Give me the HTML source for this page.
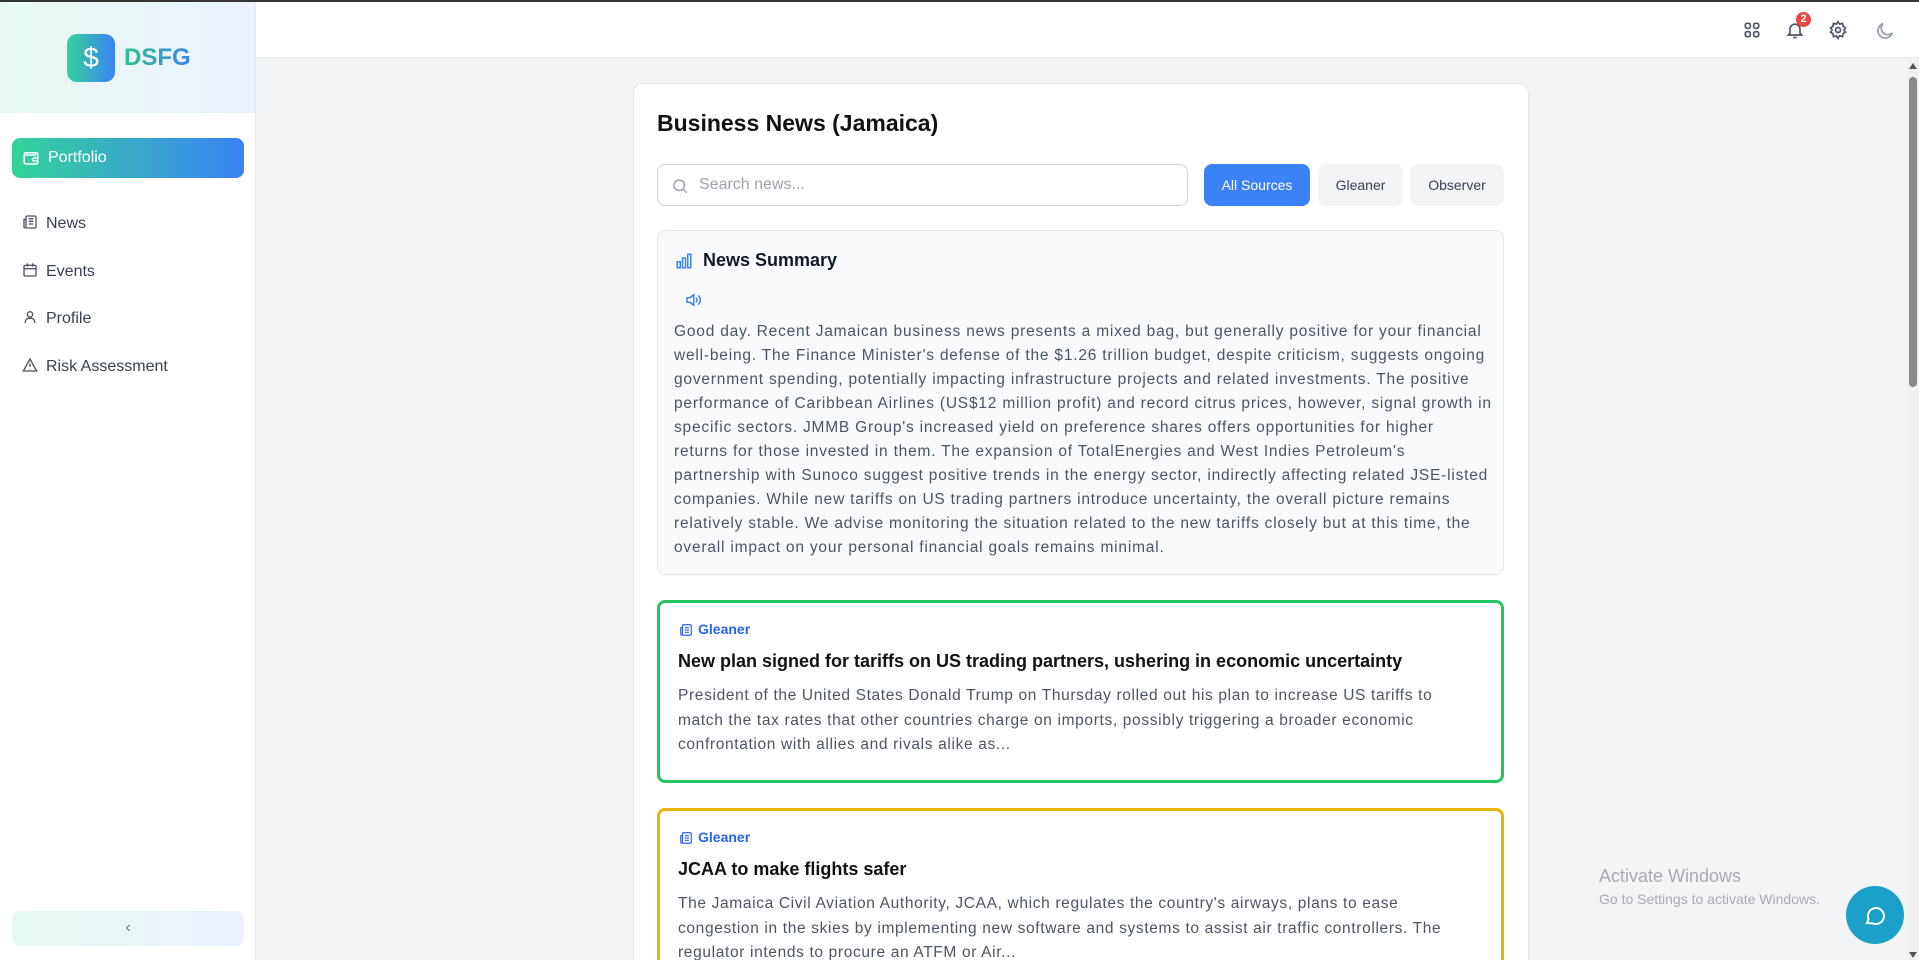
<!DOCTYPE html>
<html style="overflow:hidden"><head><meta charset="utf-8"><style>
*{box-sizing:border-box;margin:0;padding:0}
html,body{width:1919px;height:960px;overflow:hidden}
body{font-family:"Liberation Sans",sans-serif;background:#f3f4f6;color:#111827}
#w{position:relative;width:1919px;height:960px;overflow:hidden}
.topline{position:absolute;left:0;top:0;width:1919px;height:2px;background:#333}
.side{position:absolute;left:0;top:2px;width:256px;height:958px;background:#fff;border-right:1px solid #e5e7eb}
.logo{height:111px;background:linear-gradient(90deg,#e8f8f1,#ebf2fd);position:relative}
.lic{position:absolute;left:67px;top:32px;width:48px;height:48px;border-radius:10px;background:linear-gradient(90deg,#34d399,#3b82f6);color:#fff;font-size:28px;text-align:center;line-height:48px}
.ltx{position:absolute;left:124px;top:42px;font-size:24px;font-weight:bold;background:linear-gradient(90deg,#2bc48a,#3b82f6);-webkit-background-clip:text;color:transparent}
.pf{position:absolute;left:12px;top:136px;width:232px;height:40px;border-radius:8px;background:linear-gradient(90deg,#34d399,#3b82f6);color:#fff;font-size:16px;line-height:40px;padding-left:36px}
.pf svg{position:absolute;left:10px;top:11px}
.nav{position:absolute;left:22px;font-size:16px;color:#374151;height:20px;line-height:20px}
.nav span{position:absolute;left:24px;white-space:nowrap}
.col{position:absolute;left:12px;top:909px;width:232px;height:35px;border-radius:8px;background:linear-gradient(90deg,#e8f8f1,#ebf2fd);color:#6b7280;text-align:center;line-height:34px;font-size:16px}
.hdr{position:absolute;left:256px;top:2px;width:1663px;height:56px;background:#fff;border-bottom:1px solid #e5e7eb}
.hi{position:absolute;top:18px}
.card{position:absolute;left:633px;top:83px;width:896px;height:900px;background:#fff;border:1px solid #e5e7eb;border-radius:10px}
h1{position:absolute;left:657px;top:110px;font-size:23px;font-weight:bold;color:#111}
.search{position:absolute;left:657px;top:164px;width:531px;height:42px;border:1px solid #d1d5db;border-radius:8px;background:#fff;font-size:16px;color:#9ca3af;line-height:40px;padding-left:41px}
.search svg{position:absolute;left:13px;top:12px}
.btn{position:absolute;top:164px;height:42px;border-radius:8px;font-size:14px;line-height:42px;text-align:center;background:#f3f4f6;color:#374151}
.sum{position:absolute;left:657px;top:230px;width:847px;height:345px;background:#f9fafb;border:1px solid #e5e7eb;border-radius:8px}
.st{position:absolute;left:703px;top:250px;font-size:18px;font-weight:bold}
.txt{position:absolute;left:674px;top:320px;font-size:15.5px;line-height:24px;color:#4b5563;white-space:nowrap;letter-spacing:0.8px}
.art{position:absolute;left:657px;width:847px;border-radius:8px;border:3px solid}
.src{position:absolute;left:679px;font-size:14px;color:#2563eb;font-weight:bold}
.src svg{position:absolute;left:0;top:2px}
.src span{margin-left:19px}
.at{position:absolute;left:678px;font-size:18px;font-weight:bold;color:#111;white-space:nowrap}
.ad{position:absolute;left:678px;font-size:15.5px;line-height:24.5px;color:#4b5563;white-space:nowrap;letter-spacing:0.65px}
.sb{position:absolute;left:1907px;top:58px;width:12px;height:902px;background:#f1f1f1}
.thumb{position:absolute;left:1909px;top:77px;width:8px;height:310px;background:#8a8a8a;border-radius:4px}
.chat{position:absolute;left:1846px;top:886px;width:58px;height:58px;border-radius:50%;background:#1aa0c9}
.act{position:absolute;left:1599px;top:866px;color:#a8aab0;font-size:18px}
.act2{position:absolute;left:1599px;top:891px;color:#a8aab0;font-size:14px}
</style></head><body><div id="w">
<div class="topline"></div>
<div class="side">
 <div class="logo"><div class="lic">$</div><div class="ltx">DSFG</div></div>
 <div class="pf"><svg width="18" height="18" viewBox="0 0 24 24" fill="none" stroke="#fff" stroke-width="2"><rect x="3" y="5" width="18" height="15" rx="2"/><path d="M16 12h5v4h-5a2 2 0 010-4zM3 8h15V5"/></svg>Portfolio</div>
 <div class="nav" style="top:212px"><svg width="16" height="16" viewBox="0 0 24 24" fill="none" stroke="#4b5563" stroke-width="2"><rect x="6" y="3" width="15" height="18" rx="2"/><path d="M6 8H3v11a2 2 0 002 2M10 7h7M10 11h7M10 15h7"/></svg><span>News</span></div>
 <div class="nav" style="top:260px"><svg width="16" height="16" viewBox="0 0 24 24" fill="none" stroke="#4b5563" stroke-width="2"><rect x="3" y="5" width="18" height="16" rx="2"/><path d="M3 10h18M8 2v5M16 2v5"/></svg><span>Events</span></div>
 <div class="nav" style="top:307px"><svg width="16" height="16" viewBox="0 0 24 24" fill="none" stroke="#4b5563" stroke-width="2"><circle cx="12" cy="8" r="4"/><path d="M5 21v-2a5 5 0 015-5h4a5 5 0 015 5v2"/></svg><span>Profile</span></div>
 <div class="nav" style="top:355px"><svg width="16" height="16" viewBox="0 0 24 24" fill="none" stroke="#4b5563" stroke-width="2"><path d="M12 3L2 21h20zM12 10v5M12 18v.5"/></svg><span>Risk Assessment</span></div>
 <div class="col">‹</div>
</div>
<div class="hdr">
 <svg class="hi" style="left:1486px" width="20" height="20" viewBox="0 0 24 24" fill="none" stroke="#4b5563" stroke-width="2"><rect x="4" y="4" width="6" height="6" rx="2"/><rect x="14" y="4" width="6" height="6" rx="2"/><rect x="4" y="14" width="6" height="6" rx="2"/><rect x="14" y="14" width="6" height="6" rx="2"/></svg>
 <svg class="hi" style="left:1529px" width="20" height="20" viewBox="0 0 24 24" fill="none" stroke="#4b5563" stroke-width="2"><path d="M6 16V11a6 6 0 0112 0v5l2 2H4zM10 21h4"/></svg>
 <div style="position:absolute;left:1540px;top:10px;width:15px;height:15px;border-radius:50%;background:#ef4444;color:#fff;font-size:11px;font-weight:bold;text-align:center;line-height:15px">2</div>
 <svg class="hi" style="left:1572px" width="20" height="20" viewBox="0 0 24 24" fill="none" stroke="#4b5563" stroke-width="2"><circle cx="12" cy="12" r="3"/><path d="M12 2l2 3 3.5-1 .5 3.5 3 2-2 2.5 2 2.5-3 2-.5 3.5-3.5-1-2 3-2-3-3.5 1-.5-3.5-3-2 2-2.5-2-2.5 3-2L6.5 4 10 5z"/></svg>
 <svg class="hi" style="left:1618px" width="22" height="22" viewBox="0 0 24 24" fill="none" stroke="#9ca3af" stroke-width="2"><path d="M20 14A8 8 0 1110 4a6 6 0 0010 10z"/></svg>
</div>
<div class="card"></div>
<h1>Business News (Jamaica)</h1>
<div class="search"><svg width="18" height="18" viewBox="0 0 24 24" fill="none" stroke="#9ca3af" stroke-width="2"><circle cx="11" cy="11" r="7"/><path d="M16 16l5 5"/></svg>Search news...</div>
<div class="btn" style="left:1204px;width:106px;background:#3b82f6;color:#fff">All Sources</div>
<div class="btn" style="left:1318px;width:85px">Gleaner</div>
<div class="btn" style="left:1410px;width:94px">Observer</div>
<div class="sum"></div>
<svg style="position:absolute;left:675px;top:252px" width="18" height="18" viewBox="0 0 24 24" fill="none" stroke="#3b82f6" stroke-width="2"><rect x="3" y="13" width="4" height="8"/><rect x="10" y="8" width="4" height="13"/><rect x="17" y="3" width="4" height="18"/></svg>
<div class="st">News Summary</div>
<svg style="position:absolute;left:683px;top:291px" width="20" height="18" viewBox="0 0 24 24" fill="none" stroke="#3b82f6" stroke-width="2"><path d="M4 9h4l5-4v14l-5-4H4zM16 9a4 4 0 010 6M19 6a8 8 0 010 12"/></svg>
<div class="txt">Good day. Recent Jamaican business news presents a mixed bag, but generally positive for your financial<br>well-being. The Finance Minister's defense of the $1.26 trillion budget, despite criticism, suggests ongoing<br>government spending, potentially impacting infrastructure projects and related investments. The positive<br>performance of Caribbean Airlines (US$12 million profit) and record citrus prices, however, signal growth in<br>specific sectors. JMMB Group's increased yield on preference shares offers opportunities for higher<br>returns for those invested in them. The expansion of TotalEnergies and West Indies Petroleum's<br>partnership with Sunoco suggest positive trends in the energy sector, indirectly affecting related JSE-listed<br>companies. While new tariffs on US trading partners introduce uncertainty, the overall picture remains<br>relatively stable. We advise monitoring the situation related to the new tariffs closely but at this time, the<br>overall impact on your personal financial goals remains minimal.</div>
<div class="art" style="top:600px;height:183px;border-color:#22c55e"></div>
<div class="src" style="top:621px"><svg width="14" height="14" viewBox="0 0 24 24" fill="none" stroke="#2563eb" stroke-width="2"><rect x="6" y="3" width="15" height="18" rx="2"/><path d="M6 8H3v11a2 2 0 002 2M10 8h7M10 12h7M10 16h7"/></svg><span>Gleaner</span></div>
<div class="at" style="top:651px">New plan signed for tariffs on US trading partners, ushering in economic uncertainty</div>
<div class="ad" style="top:684px">President of the United States Donald Trump on Thursday rolled out his plan to increase US tariffs to<br>match the tax rates that other countries charge on imports, possibly triggering a broader economic<br>confrontation with allies and rivals alike as...</div>
<div class="art" style="top:808px;height:200px;border-color:#eab308"></div>
<div class="src" style="top:829px"><svg width="14" height="14" viewBox="0 0 24 24" fill="none" stroke="#2563eb" stroke-width="2"><rect x="6" y="3" width="15" height="18" rx="2"/><path d="M6 8H3v11a2 2 0 002 2M10 8h7M10 12h7M10 16h7"/></svg><span>Gleaner</span></div>
<div class="at" style="top:859px">JCAA to make flights safer</div>
<div class="ad" style="top:892px">The Jamaica Civil Aviation Authority, JCAA, which regulates the country's airways, plans to ease<br>congestion in the skies by implementing new software and systems to assist air traffic controllers. The<br>regulator intends to procure an ATFM or Air...</div>
<div class="act">Activate Windows</div>
<div class="act2">Go to Settings to activate Windows.</div>
<div class="chat"><svg style="position:absolute;left:17px;top:17px" width="24" height="24" viewBox="0 0 24 24" fill="none" stroke="#fff" stroke-width="2"><path d="M4 20l1.5-4A8 8 0 1110 20.5z"/></svg></div>
<div class="sb"></div><div class="thumb"></div>
<div style="position:absolute;left:1909px;top:63px;width:0;height:0;border-left:4px solid transparent;border-right:4px solid transparent;border-bottom:6px solid #555"></div>
<div style="position:absolute;left:1909px;top:952px;width:0;height:0;border-left:4px solid transparent;border-right:4px solid transparent;border-top:6px solid #555"></div>
</div></body></html>
